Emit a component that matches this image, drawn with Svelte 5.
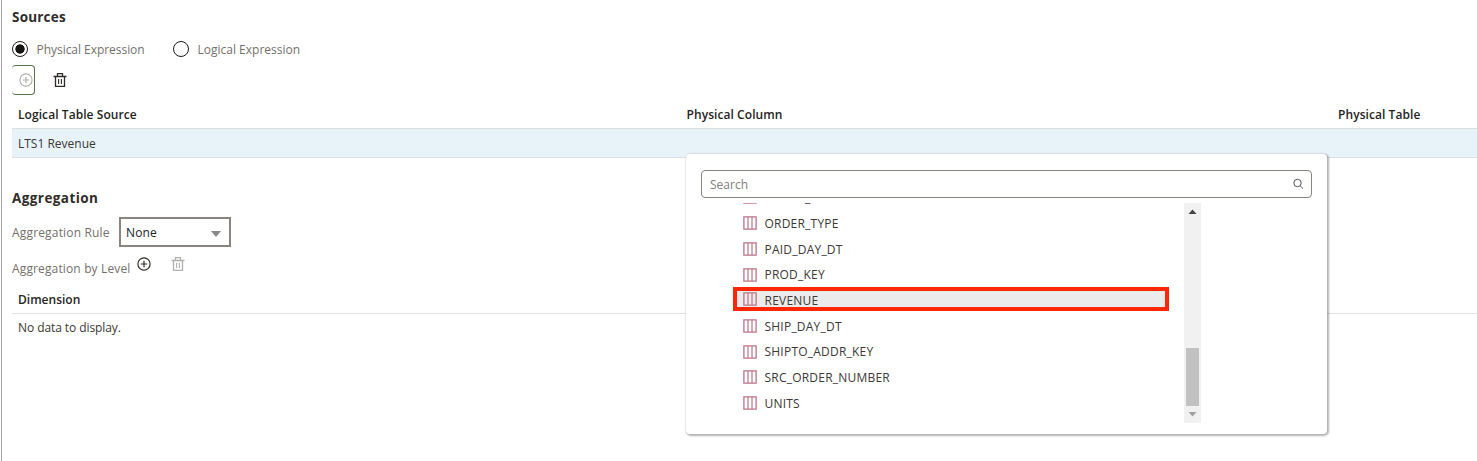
<script>
  const columns = [
    'ORDER_KEY', 'ORDER_TYPE', 'PAID_DAY_DT', 'PROD_KEY', 'REVENUE',
    'SHIP_DAY_DT', 'SHIPTO_ADDR_KEY', 'SRC_ORDER_NUMBER', 'UNITS'
  ];
  const selected = 'REVENUE';
</script>

{#snippet plus()}
  <svg width="14" height="14" viewBox="0 0 14 14" fill="none" stroke="currentColor" stroke-width="1.2">
    <circle cx="7" cy="7" r="6.1" /><path d="M7 3.8v6.4M3.8 7h6.4" />
  </svg>
{/snippet}

{#snippet trash()}
  <svg width="14" height="14" viewBox="0 0 14 14" fill="none" stroke="currentColor" stroke-width="1.3">
    <path d="M.5 3.5h13M4.5 3.5v-2.9h5v2.9M2.5 3.5v9.9h9V3.5" /><path stroke-width="1.1" d="M5.6 6v5M8.4 6v5" />
  </svg>
{/snippet}

<main>
  <h2 class="sources">Sources</h2>
  <div class="radios">
    <span class="radio on"></span><span class="label first">Physical Expression</span>
    <span class="radio"></span><span class="label">Logical Expression</span>
  </div>
  <div class="tools">
    <span class="add">{@render plus()}</span>
    <span class="del">{@render trash()}</span>
  </div>

  <div class="table">
    <div class="row head"><span>Logical Table Source</span><span>Physical Column</span><span>Physical Table</span></div>
    <div class="row data"><span>LTS1 Revenue</span></div>
  </div>

  <h2 class="agg">Aggregation</h2>
  <div class="rule">
    <span class="label">Aggregation Rule</span>
    <div class="select"><span>None</span><i></i></div>
  </div>
  <div class="level">
    <span class="label">Aggregation by Level</span>
    <span class="plus">{@render plus()}</span>
    <span class="muted">{@render trash()}</span>
  </div>
  <div class="dimension">Dimension</div>
  <div class="empty">No data to display.</div>

  <section class="popup">
    <div class="search">
      <span>Search</span>
      <svg width="12" height="12" viewBox="0 0 12 12" fill="none" stroke="#55524f" stroke-width="1">
        <circle cx="5.5" cy="5" r="3.7" /><path d="M8.2 7.8l2.8 2.8" />
      </svg>
    </div>
    <div class="viewport">
      <ul>
        {#each columns as name}
          <li class:selected={name === selected}>
            <svg width="14" height="14" viewBox="0 0 14 14" fill="none" stroke="#bd7386">
              <path stroke-width="1.3" d="M.9.9h12.2v12.2H.9z" /><path stroke-width="1.2" d="M5 1v12M9 1v12" />
            </svg>
            <span>{name}</span>
          </li>
        {/each}
      </ul>
      <div class="scrollbar">
        <svg width="17" height="17"><path d="M4.5 11h8L8.5 6.5z" fill="#444" /></svg>
        <div class="thumb"></div>
        <svg width="17" height="17"><path d="M4.5 6h8L8.5 10.5z" fill="#a0a0a0" /></svg>
      </div>
    </div>
  </section>
</main>

<style>
  :global(body) { background: #fff; overflow: hidden; }
  main {
    position: relative;
    box-sizing: border-box;
    width: 1476px;
    height: 461px;
    margin-left: 1px;
    padding-left: 10px;
    border-left: 1px solid #a3a3a3;
    font: 12px/16px "Open Sans", "Noto Sans", sans-serif;
    color: #3b3835;
    overflow: hidden;
    white-space: nowrap;
  }
  svg { display: block; flex: none; }
  h2 { margin: 0; font-size: 13.5px; line-height: 18px; font-weight: 700; color: #302d2a; }
  .sources { padding-top: 8px; letter-spacing: .2px; }
  .radios { display: flex; align-items: center; height: 18px; margin-top: 14px; }
  .radios .label { padding-top: 2px; }
  .radio { box-sizing: border-box; width: 16px; height: 16px; border: 1.5px solid #1c1a18; border-radius: 50%; margin-right: 8.5px; }
  .on { background: radial-gradient(circle, #161513 4.3px, transparent 5px); }
  .label { color: #74706c; }
  .radios .first { width: 136.5px; letter-spacing: -.04px; }
  .tools { display: flex; height: 30px; margin-top: 7px; }
  .add { box-sizing: border-box; width: 23px; border: 1px solid #527447; border-left: 0; border-radius: 4px; padding: 7px 0 0 7px; color: #b3b1af; }
  .del { padding: 8px 0 0 18px; color: #302c29; }
  .table { padding-top: 6px; }
  .row { display: grid; grid-template-columns: 668.5px 651.5px 1fr; box-sizing: border-box; padding-left: 6px; border-bottom: 1px solid #dcdfe1; }
  .head { height: 28px; padding-top: 6px; font-weight: 600; color: #262422; letter-spacing: .07px; }
  .data { height: 29px; padding-top: 7px; background: #e7f2f9; }
  .agg { padding-top: 31px; letter-spacing: .42px; }
  .rule { display: flex; align-items: center; height: 30px; margin-top: 10px; letter-spacing: .17px; }
  .rule .label { width: 107px; padding-top: 2px; }
  .select { display: flex; align-items: center; justify-content: space-between; box-sizing: border-box; width: 112px; height: 30px; border: 2px solid #8b8580; padding: 0 8px 0 5px; color: #201e1c; }
  .select span { padding-top: 2px; }
  .select i { border: 5px solid transparent; border-top: 6px solid #87898c; border-bottom: 0; margin-top: 3px; }
  .level { display: flex; height: 24px; margin-top: 10px; letter-spacing: .14px; }
  .level .label { width: 125px; padding-top: 4px; }
  .plus { width: 34px; color: #302c29; }
  .muted { color: #b3b1af; }
  .dimension { height: 21px; margin-top: 11px; padding-left: 6px; border-bottom: 1px solid #e0e0e0; font-weight: 600; color: #262422; }
  .empty { padding: 6px 0 0 6px; letter-spacing: -.08px; }
  .popup { position: absolute; left: 684px; top: 154px; box-sizing: border-box; width: 641px; height: 280px; padding: 16px 15px 0; background: #fff; border-radius: 4px; box-shadow: 1px 1px 2px 1px #0000004d; }
  .search { display: flex; align-items: center; justify-content: space-between; box-sizing: border-box; width: 611px; height: 28px; border: 1px solid #8b8580; border-radius: 4px; padding: 0 7px 0 8px; color: #827e7a; }
  .search span { padding-top: 2px; }
  .viewport { display: flex; height: 220px; margin-top: 5px; overflow: hidden; }
  ul { list-style: none; margin: -18.4px 0 0 32px; padding: 0; width: 436px; }
  li { display: flex; align-items: center; box-sizing: border-box; height: 25.7px; padding-left: 10px; gap: 7.5px; letter-spacing: .22px; }
  li span { padding-top: 1.5px; }
  .selected { height: 24px; margin: 0 0 1.7px; padding-left: 6px; border: 4px solid #ff2600; background: #ebebeb; }
  .selected span { padding-top: 2.5px; }
  .scrollbar { width: 17px; margin-left: 15px; background: #f1f1f1; display: flex; flex-direction: column; }
  .thumb { width: 13px; height: 58px; margin: auto 2px 0; background: #c1c1c1; }
</style>
